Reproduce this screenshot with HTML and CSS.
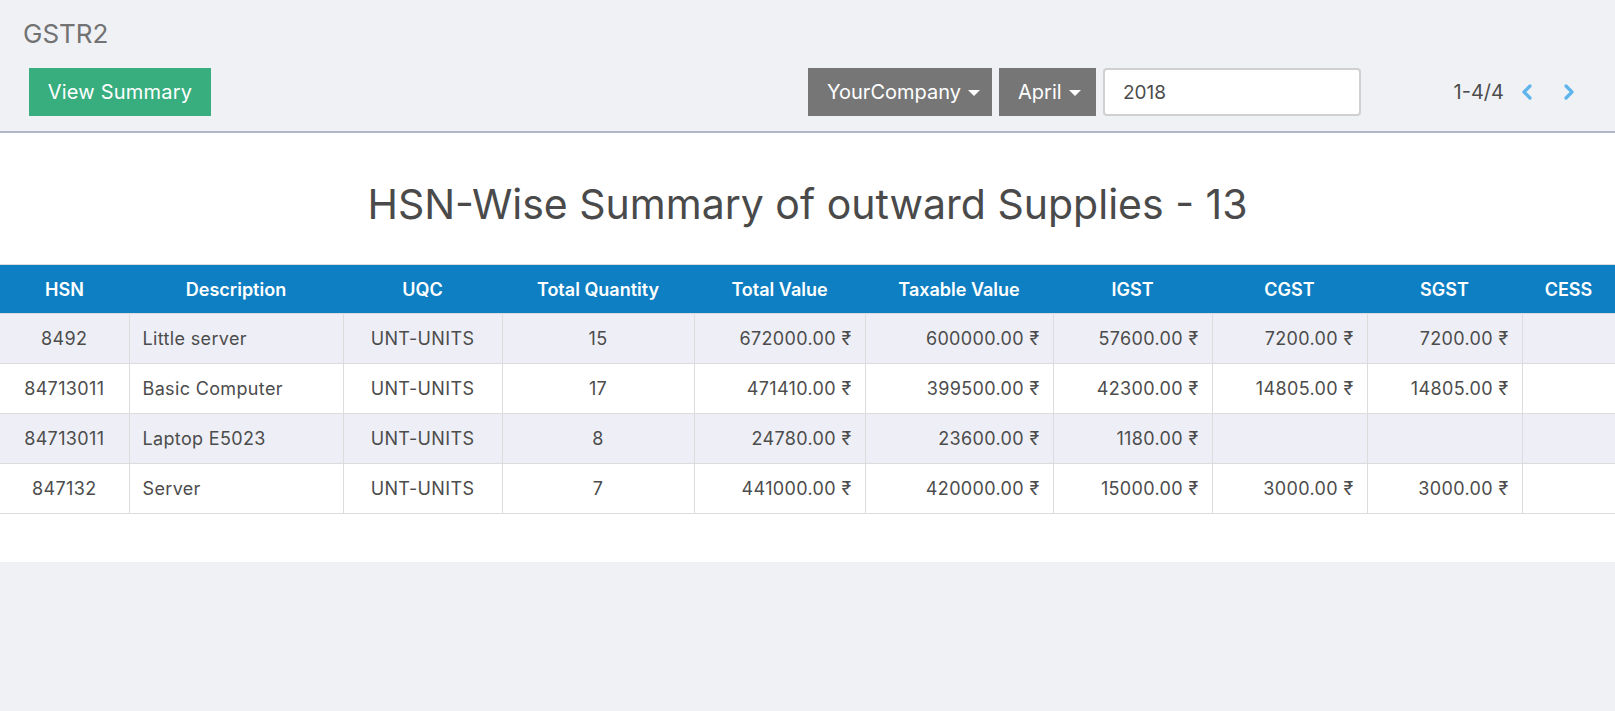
FILE: index.html
```html
<!DOCTYPE html>
<html>
<head>
<meta charset="utf-8">
<link rel="stylesheet" href="styles.css">
</head>
<body>
<div class="control-panel">
  <div class="breadcrumb">GSTR2</div>
  <div class="cp-row">
    <div class="cp-left">
      <button class="btn-primary">View Summary</button>
    </div>
    <div class="cp-right">
      <div class="filters">
        <button class="dd dd-company">YourCompany <span class="caret"></span></button>
        <button class="dd dd-month">April <span class="caret"></span></button>
        <input class="year" type="text" value="2018">
      </div>
      <div class="pager">
        <span class="pager-value">1-4/4</span>
        <button class="pager-btn" aria-label="Previous">
          <svg width="12" height="16" viewBox="0 0 12 16"><path d="M9 2 L3 8 L9 14" fill="none" stroke="#5eb4ec" stroke-width="3.2" stroke-linecap="round" stroke-linejoin="round"/></svg>
        </button>
        <button class="pager-btn" aria-label="Next">
          <svg width="12" height="16" viewBox="0 0 12 16"><path d="M3 2 L9 8 L3 14" fill="none" stroke="#5eb4ec" stroke-width="3.2" stroke-linecap="round" stroke-linejoin="round"/></svg>
        </button>
      </div>
    </div>
  </div>
</div>
<div class="content">
  <h1 class="title">HSN-Wise Summary of outward Supplies - 13</h1>
  <table class="summary">
    <colgroup>
      <col class="w-hsn"><col class="w-desc"><col class="w-uqc"><col class="w-qty"><col class="w-tv"><col class="w-txv"><col class="w-igst"><col class="w-cgst"><col class="w-sgst"><col class="w-cess">
    </colgroup>
    <thead>
      <tr><th>HSN</th><th>Description</th><th>UQC</th><th>Total Quantity</th><th>Total Value</th><th>Taxable Value</th><th>IGST</th><th>CGST</th><th>SGST</th><th>CESS</th></tr>
    </thead>
    <tbody>
      <tr><td class="c">8492</td><td>Little server</td><td class="c">UNT-UNITS</td><td class="c">15</td><td class="r">672000.00 ₹</td><td class="r">600000.00 ₹</td><td class="r">57600.00 ₹</td><td class="r">7200.00 ₹</td><td class="r">7200.00 ₹</td><td></td></tr>
      <tr><td class="c">84713011</td><td>Basic Computer</td><td class="c">UNT-UNITS</td><td class="c">17</td><td class="r">471410.00 ₹</td><td class="r">399500.00 ₹</td><td class="r">42300.00 ₹</td><td class="r">14805.00 ₹</td><td class="r">14805.00 ₹</td><td></td></tr>
      <tr><td class="c">84713011</td><td>Laptop E5023</td><td class="c">UNT-UNITS</td><td class="c">8</td><td class="r">24780.00 ₹</td><td class="r">23600.00 ₹</td><td class="r">1180.00 ₹</td><td></td><td></td><td></td></tr>
      <tr><td class="c">847132</td><td>Server</td><td class="c">UNT-UNITS</td><td class="c">7</td><td class="r">441000.00 ₹</td><td class="r">420000.00 ₹</td><td class="r">15000.00 ₹</td><td class="r">3000.00 ₹</td><td class="r">3000.00 ₹</td><td></td></tr>
    </tbody>
  </table>
</div>
</body>
</html>
```
FILE: styles.css
```css
* { box-sizing: border-box; }
html, body {
  margin: 0;
  padding: 0;
  background: #f0f1f5;
  font-family: Inter, "Noto Sans", "Liberation Sans", sans-serif;
  color: #4c4c4c;
}
.control-panel {
  padding: 19px 40px 15px 0;
  border-bottom: 2px solid #aeb8c8;
}
.breadcrumb {
  padding-left: 23px;
  font-size: 26px;
  line-height: 29px;
  height: 29px;
  color: #727272;
  margin-bottom: 20px;
}
.cp-row {
  display: grid;
  grid-template-columns: 808px 1fr;
  height: 48px;
}
.cp-left {
  padding-left: 29px;
}
.btn-primary {
  height: 48px;
  width: 182px;
  border: none;
  background: #38ae7f;
  color: #fff;
  font-family: inherit;
  font-size: 20px;
  letter-spacing: 0.2px;
  padding: 0;
}
.cp-right {
  display: flex;
  justify-content: space-between;
  align-items: center;
}
.filters {
  display: flex;
  gap: 7px;
  height: 48px;
}
.dd {
  height: 48px;
  border: none;
  background: #767676;
  color: #fff;
  font-family: inherit;
  font-size: 20px;
  padding: 0 0 0 19px;
  display: flex;
  align-items: center;
  gap: 7px;
}
.dd-company { width: 184px; }
.dd-month { width: 97px; }
.caret {
  display: inline-block;
  width: 0;
  height: 0;
  border-left: 6px solid transparent;
  border-right: 6px solid transparent;
  border-top: 6px solid #fff;
  margin-top: 2px;
}
.year {
  width: 258px;
  height: 48px;
  border: 2px solid #d0d0d0;
  border-radius: 4px;
  background: #fff;
  font-family: inherit;
  font-size: 19px;
  color: #4c4c4c;
  padding: 0 18px;
  outline: none;
}
.pager {
  display: flex;
  align-items: center;
}
.pager-value {
  font-size: 20px;
  color: #4c4c4c;
  margin-right: 17px;
}
.pager-btn {
  border: none;
  background: none;
  padding: 0;
  height: 16px;
  display: flex;
  align-items: center;
}
.pager-btn + .pager-btn {
  margin-left: 30px;
}
.content {
  background: #fff;
  padding: 48px 0 48px;
}
.title {
  margin: 0 0 36px;
  text-align: center;
  font-size: 41px;
  line-height: 47px;
  font-weight: 400;
  color: #4a4a4a;
}
.summary {
  width: 1615px;
  border-collapse: collapse;
  table-layout: fixed;
  border-top: 1px solid #dcdcdc;
}
.w-hsn { width: 129px; }
.w-desc { width: 214px; }
.w-uqc { width: 159px; }
.w-qty { width: 192px; }
.w-tv { width: 171px; }
.w-txv { width: 188px; }
.w-igst { width: 159px; }
.w-cgst { width: 155px; }
.w-sgst { width: 155px; }
.w-cess { width: 93px; }
.summary th {
  background: #0e7fc3;
  color: #fff;
  font-weight: 600;
  font-size: 18px;
  height: 49px;
  text-align: center;
  padding: 0 4px;
}
.summary td {
  height: 50px;
  font-size: 18px;
  letter-spacing: 0.35px;
  padding: 0 13px;
  border: 1px solid #dcdcdc;
  color: #4c4c4c;
}
.summary td:first-child { border-left: none; }
.summary td:last-child { border-right: none; }
.summary tbody tr:nth-child(odd) td { background: #eeeff6; }
.summary td.c { text-align: center; }
.summary td.r { text-align: right; }
```
